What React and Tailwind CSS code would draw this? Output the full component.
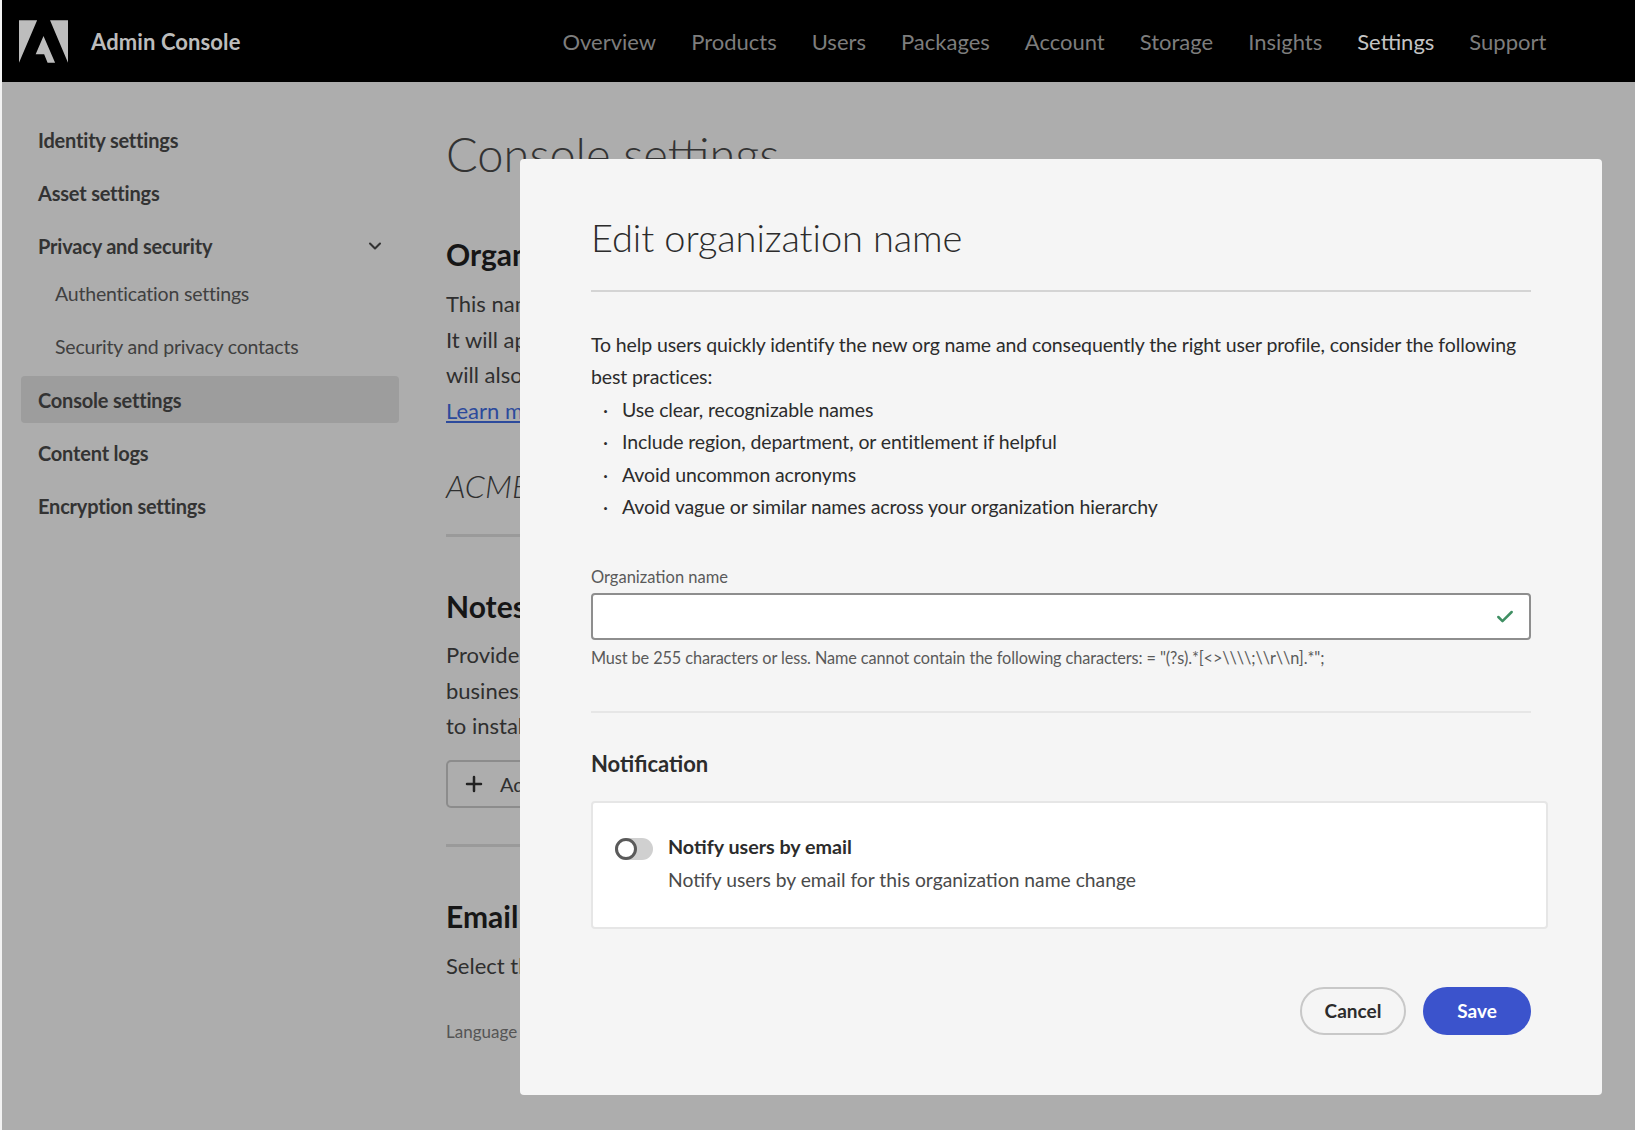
import React from 'react';
import { ChevronDown, Plus, Check } from 'lucide-react';

const navItems = ['Overview', 'Products', 'Users', 'Packages', 'Account', 'Storage', 'Insights', 'Settings', 'Support'];

const tips = [
  'Use clear, recognizable names',
  'Include region, department, or entitlement if helpful',
  'Avoid uncommon acronyms',
  'Avoid vague or similar names across your organization hierarchy',
];

function SideItem({ label, sub, active, chevron }) {
  return (
    <div
      className={`flex h-[47px] items-center justify-between rounded-[4px] pr-[14px] tracking-[-0.2px] ${
        sub ? 'pl-[34px] text-[19.5px] font-normal text-[#404040]' : 'pl-[17px] text-[20px] font-bold text-[#333333]'
      } ${active ? 'bg-[#9d9d9d]' : ''}`}
    >
      <span>{label}</span>
      {chevron && <ChevronDown className="h-5 w-5 text-[#333333]" strokeWidth={2.5} />}
    </div>
  );
}

export default function App() {
  return (
    <div className="relative flex h-[1130px] w-[1635px] flex-col overflow-hidden bg-[#f2f2f2] pl-[2px] font-['Lato',sans-serif]">
      <header className="flex h-[82px] shrink-0 items-center bg-black">
        <svg viewBox="0 0 30 26" className="ml-[17px] h-[45px] w-[49px] fill-[#bdbdbd]">
          <path d="M19 0h11v26zM11.1 0H0v26zM15 9.6L22.1 26h-4.6l-2.1-5.2h-5.2z" />
        </svg>
        <span className="ml-[23px] text-[22px] font-bold tracking-[0.1px] text-[#bcbcbc]">Admin Console</span>
        <nav className="ml-[322px] flex gap-[35px] text-[22px] text-[#7d7d7d]">
          {navItems.map((item) => (
            <span key={item} className={item === 'Settings' ? 'text-[#c4c4c4]' : ''}>
              {item}
            </span>
          ))}
        </nav>
      </header>

      <div className="flex flex-1 bg-[#adadad]">
        <aside className="w-[426px] shrink-0 pl-[19px] pr-[22px] pt-[34px]">
          <div className="w-[378px]">
            <div className="flex flex-col gap-[6px]">
              <SideItem label="Identity settings" />
              <SideItem label="Asset settings" />
              <SideItem label="Privacy and security" chevron />
            </div>
            <div className="mt-[1px] flex flex-col gap-[6px]">
              <SideItem label="Authentication settings" sub />
              <SideItem label="Security and privacy contacts" sub />
              <SideItem label="Console settings" active />
              <SideItem label="Content logs" />
              <SideItem label="Encryption settings" />
            </div>
          </div>
        </aside>

        <main className="min-w-0 flex-1 pl-[18px] text-[#2f2f2f]">
          <h1 className="mt-[39px] text-[47px] font-light leading-[66px] text-[#333333]">Console settings</h1>
          <h2 className="mt-[47px] text-[30px] font-bold leading-[40px] text-[#161616]">Organization</h2>
          <div className="mt-[12px] text-[22px] leading-[35.7px]">
            <p>This name</p>
            <p>It will appear</p>
            <p>will also</p>
            <a className="text-[#2c4a9c] underline">Learn more</a>
          </div>
          <p className="mt-[35px] text-[32px] font-light italic leading-[44px]">ACME</p>
          <div className="mt-[26px] h-[3px] w-[200px] bg-[#9a9a9a]" />
          <h2 className="mt-[49px] text-[30px] font-bold leading-[40px] text-[#161616]">Notes</h2>
          <div className="mt-[11px] text-[22px] leading-[35.7px]">
            <p>Provide</p>
            <p>business</p>
            <p>to install</p>
          </div>
          <div className="mt-[16px] flex h-[48px] w-[200px] items-center rounded-[5px] border-2 border-[#8c8c8c] pl-[14px]">
            <Plus className="h-6 w-6 text-[#222222]" strokeWidth={2.5} />
            <span className="ml-[14px] text-[20px]">Add</span>
          </div>
          <div className="mt-[36px] h-[3px] w-[200px] bg-[#9a9a9a]" />
          <h2 className="mt-[49px] text-[30px] font-bold leading-[40px] text-[#161616]">Email</h2>
          <p className="mt-[12px] text-[22px] leading-[36px]">Select the</p>
          <p className="mt-[36px] text-[17px] leading-[24px] text-[#555555]">Language</p>
        </main>
      </div>

      {/* Dialog */}
      <div className="absolute left-[520px] top-[159px] h-[936px] w-[1082px] rounded-[4px] bg-[#f5f5f5] pl-[71px] pr-[71px] pt-[49px]">
        <h2 className="text-[38px] font-light leading-[58px] tracking-[-0.1px] text-[#2c2c2c]">Edit organization name</h2>
        <div className="mt-[24px] h-[2px] bg-[#d4d4d4]" />

        <div className="mt-[37px] text-[19.5px] leading-[32.4px] tracking-[-0.12px] text-[#2c2c2c]">
          <p>To help users quickly identify the new org name and consequently the right user profile, consider the following best practices:</p>
          <ul>
            {tips.map((tip) => (
              <li key={tip} className="flex">
                <span className="w-[31px] pl-[12px]">·</span>
                <span>{tip}</span>
              </li>
            ))}
          </ul>
        </div>

        <label className="mt-[42px] block text-[16.5px] leading-[24px] text-[#5a5a5a]">Organization name</label>
        <div className="mt-[4px] flex h-[47px] items-center justify-end rounded-[4px] border-2 border-[#8e8e8e] bg-white pr-[14px]">
          <Check className="h-5 w-5 text-[#3f8f63]" strokeWidth={3} />
        </div>
        <p className="mt-[7px] text-[16.3px] leading-[22px] tracking-[-0.1px] text-[#5a5a5a]">
          {'Must be 255 characters or less. Name cannot contain the following characters: = "(?s).*[<>\\\\\\\\;\\\\r\\\\n].*";'}
        </p>

        <div className="mt-[42px] h-[2px] bg-[#e6e6e6]" />
        <h3 className="mt-[36px] text-[22px] font-bold leading-[30px] text-[#2c2c2c]">Notification</h3>

        <div className="mt-[22px] flex h-[128px] w-[957px] items-start rounded-[4px] border-2 border-[#e6e6e6] bg-white pl-[22px] pt-[28px]">
          <div className="relative mt-[7px] h-[22px] w-[38px] rounded-full bg-[#d0d0d0]">
            <div className="h-[22px] w-[22px] rounded-full border-[3px] border-[#5a5a5a] bg-white" />
          </div>
          <div className="ml-[15px] text-[19.3px] leading-[32px] text-[#2c2c2c]">
            <p className="text-[19.7px] font-bold">Notify users by email</p>
            <p className="mt-[1px] text-[#4a4a4a]">Notify users by email for this organization name change</p>
          </div>
        </div>

        <div className="mt-[58px] flex justify-end gap-[17px] text-[19px] font-bold">
          <button className="h-[48px] w-[106px] rounded-full border-2 border-[#c8c8c8] text-[#2c2c2c]">Cancel</button>
          <button className="h-[48px] w-[108px] rounded-full bg-[#3b53cc] text-white">Save</button>
        </div>
      </div>
    </div>
  );
}
